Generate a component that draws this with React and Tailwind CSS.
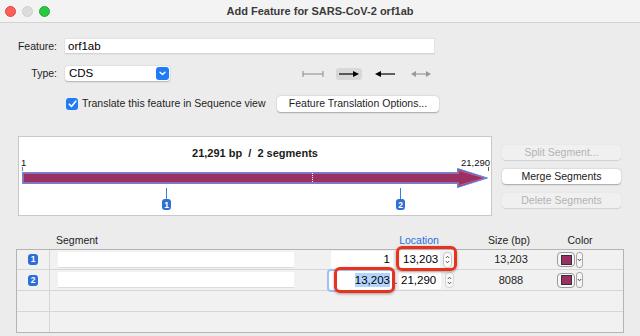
import React from "react";

function Chevron({ className = "" }) {
  return (
    <svg width="7" height="5" viewBox="0 0 7 5" className={className}>
      <path d="M1 1.2 L3.5 3.6 L6 1.2" fill="none" stroke="currentColor" strokeWidth="1.4" strokeLinecap="round" strokeLinejoin="round" />
    </svg>
  );
}

function Stepper({ bg = true }) {
  return (
    <div className={`w-[9px] h-[16px] rounded-[4px] flex flex-col items-center justify-center gap-[1px] ${bg ? "bg-white border border-[#c4c4c4]" : "border border-[#d6d6d6] bg-[#f7f7f7]"}`}>
      <svg width="5" height="4" viewBox="0 0 5 4"><path d="M0.8 3 L2.5 1.2 L4.2 3" fill="none" stroke="#444" strokeWidth="0.9" /></svg>
      <svg width="5" height="4" viewBox="0 0 5 4"><path d="M0.8 1 L2.5 2.8 L4.2 1" fill="none" stroke="#444" strokeWidth="0.9" /></svg>
    </div>
  );
}

function Badge({ n }) {
  return (
    <div className="w-[10px] h-[11px] rounded-[3px] bg-[#2d6fd9] text-white text-[8.5px] font-bold leading-[11px] text-center">{n}</div>
  );
}

function ColorWell() {
  return (
    <div className="flex items-center gap-[1px]">
      <div className="w-[18px] h-[15px] rounded-[4px] border border-[#9a9a9a] bg-[#f6f6f6] flex items-center justify-center">
        <div className="w-[11px] h-[10px] bg-[#9b2f62] border border-[#333]" />
      </div>
      <div className="w-[7px] h-[16px] rounded-[3px] border border-[#a8a8a8] bg-[#f6f6f6] flex items-center justify-center">
        <svg width="5" height="4" viewBox="0 0 5 4"><path d="M0.8 1 L2.5 2.8 L4.2 1" fill="none" stroke="#333" strokeWidth="0.9" /></svg>
      </div>
    </div>
  );
}

export default function App() {
  return (
    <div className="w-[640px] h-[336px] overflow-hidden bg-[#ececec] font-['Liberation_Sans',Arial,sans-serif] text-[10.5px] text-[#1e1e1e] relative">
      {/* Title bar */}
      <div className="h-[23px] grid grid-cols-[1fr_auto_1fr] items-center border-b border-[#d2d2d2] bg-[#f3f3f3]">
        <div className="flex items-center gap-[6px] pl-[5px]">
          <span className="w-[11px] h-[11px] rounded-full bg-[#fe5f57] border border-[#e2463f]" />
          <span className="w-[11px] h-[11px] rounded-full bg-[#dcdcdc] border border-[#cfcfcf]" />
          <span className="w-[11px] h-[11px] rounded-full bg-[#28c840] border border-[#1fae35]" />
        </div>
        <div className="font-bold text-[11px] text-[#3a3a3a]">Add Feature for SARS-CoV-2 orf1ab</div>
        <div />
      </div>

      {/* Feature row */}
      <div className="flex items-center mt-[16px] h-[15px]">
        <div className="w-[57px] text-right">Feature:</div>
        <div className="ml-[8px] w-[369px] h-[15px] bg-white border-b border-[#d4d4d4] shadow-[0_0_0_0.5px_#d8d8d8] pl-[3px] text-[11.5px] leading-[15px] text-black">orf1ab</div>
      </div>

      {/* Type row */}
      <div className="flex items-center mt-[12px] h-[15px]">
        <div className="w-[57px] text-right">Type:</div>
        <div className="ml-[8px] w-[105px] h-[15px] bg-white rounded-[3px] shadow-[0_0.5px_1.5px_rgba(0,0,0,0.25)] flex items-center justify-between pl-[4px] pr-[1px]">
          <span className="text-[11.5px] text-black">CDS</span>
          <div className="w-[13px] h-[13px] rounded-[3px] bg-[#1f7cf6] text-white flex items-center justify-center">
            <Chevron />
          </div>
        </div>
        <div className="ml-[130px] flex items-center gap-[10px]">
          <div className="w-[26px] h-[12px] flex items-center justify-center">
            <svg width="22" height="8" viewBox="0 0 22 8"><path d="M1 1 V7 M1 4 H21 M21 1 V7" stroke="#8a8a8a" strokeWidth="1" fill="none" /></svg>
          </div>
          <div className="w-[26px] h-[12px] rounded-[3px] bg-[#d8d8d8] flex items-center justify-center">
            <svg width="22" height="8" viewBox="0 0 22 8"><path d="M1 4 H16" stroke="#000" strokeWidth="1.2" /><path d="M15 1 L21 4 L15 7 Z" fill="#000" /></svg>
          </div>
          <div className="w-[26px] h-[12px] flex items-center justify-center">
            <svg width="22" height="8" viewBox="0 0 22 8"><path d="M6 4 H21" stroke="#000" strokeWidth="1.2" /><path d="M7 1 L1 4 L7 7 Z" fill="#000" /></svg>
          </div>
          <div className="w-[26px] h-[12px] flex items-center justify-center">
            <svg width="22" height="8" viewBox="0 0 22 8"><path d="M5 4 H17" stroke="#999" strokeWidth="1.2" /><path d="M6 1 L1 4 L6 7 Z M16 1 L21 4 L16 7 Z" fill="#999" /></svg>
          </div>
        </div>
      </div>

      {/* Checkbox row */}
      <div className="flex items-center mt-[15px] h-[16px] pl-[66px]">
        <div className="w-[12px] h-[12px] rounded-[3px] bg-[#1f7cf6] flex items-center justify-center">
          <svg width="9" height="8" viewBox="0 0 9 8"><path d="M1.3 4.2 L3.5 6.4 L7.8 1.2" fill="none" stroke="#fff" strokeWidth="1.6" strokeLinecap="round" strokeLinejoin="round" /></svg>
        </div>
        <div className="ml-[4px] w-[195px] whitespace-nowrap text-[10.5px]">Translate this feature in Sequence view</div>
        <div className="w-[162px] h-[16px] bg-white rounded-[4px] shadow-[0_0.5px_1.5px_rgba(0,0,0,0.3)] flex items-center justify-center text-[10.5px]">
          Feature Translation Options...
        </div>
      </div>

      {/* Diagram + buttons */}
      <div className="flex mt-[24px]">
        <div className="ml-[18px] w-[474px] h-[80px] bg-white border border-[#c8c8c8] relative">
          <div className="absolute top-[8px] left-0 right-0 text-center font-bold text-[11px] text-[#1a1a1a] whitespace-pre">21,291 bp  /  2 segments</div>
          <svg className="absolute left-0 top-0" width="472" height="78" viewBox="19 137 472 78">
            <text x="21" y="166" fontSize="9.5" fill="#111">1</text>
            <path d="M22.5 167 V171" stroke="#888" strokeWidth="1.2" />
            <text x="490" y="166" fontSize="9.5" fill="#111" textAnchor="end">21,290</text>
            <path d="M488.5 167 V171" stroke="#555" strokeWidth="1" />
            <path d="M22.5 172.5 H457.5 V168.5 L487.5 178 L457.5 187.5 V183.5 H22.5 Z" fill="#9b3062" stroke="#4a8ff8" strokeWidth="1" />
            <path d="M23.5 173.5 H458.5 V170.5 L485 178 L458.5 185.5 V182.5 H23.5 Z" fill="none" stroke="#e8a0bd" strokeWidth="0.6" opacity="0.7" />
            <path d="M312.5 173 V183" stroke="#fff" strokeWidth="1" strokeDasharray="1 1" />
            <path d="M166.5 188 V199" stroke="#3b7ddd" strokeWidth="1" />
            <rect x="162" y="199" width="9" height="11" rx="3" fill="#2f6fd6" />
            <text x="166.5" y="208" fontSize="8.5" fontWeight="bold" fill="#fff" textAnchor="middle">1</text>
            <path d="M400.5 188 V199" stroke="#3b7ddd" strokeWidth="1" />
            <rect x="396" y="199" width="9" height="11" rx="3" fill="#2f6fd6" />
            <text x="400.5" y="208" fontSize="8.5" fontWeight="bold" fill="#fff" textAnchor="middle">2</text>
          </svg>
        </div>
        <div className="ml-[10px] w-[119px] pt-[9px] flex flex-col gap-[9px]">
          <div className="h-[15px] rounded-[4px] bg-[#f0f0f0] shadow-[0_0.5px_1px_rgba(0,0,0,0.12)] text-[#b3b3b3] flex items-center justify-center">Split Segment...</div>
          <div className="h-[15px] rounded-[4px] bg-white shadow-[0_0.5px_1.5px_rgba(0,0,0,0.3)] text-[#1a1a1a] flex items-center justify-center">Merge Segments</div>
          <div className="h-[15px] rounded-[4px] bg-[#f0f0f0] shadow-[0_0.5px_1px_rgba(0,0,0,0.12)] text-[#b3b3b3] flex items-center justify-center">Delete Segments</div>
        </div>
      </div>

      {/* Table header */}
      <div className="flex items-center h-[16px] mt-[17px] text-[10.5px]">
        <div className="ml-[56px]">Segment</div>
        <div className="ml-[301px] w-[40px] text-center text-[#1f6fe0]">Location</div>
        <div className="ml-[49px] w-[42px] text-center">Size (bp)</div>
        <div className="ml-[37px] w-[26px] text-center">Color</div>
      </div>

      {/* Table */}
      <div className="ml-[16px] w-[608px] border border-[#b4b4b4] bg-[#f1f1f1]">
        {/* Row 1 */}
        <div className="flex h-[20px] border-b border-[#d6d6d6] items-center">
          <div className="w-[33px] h-full border-r border-[#d6d6d6] flex items-center justify-center"><Badge n="1" /></div>
          <div className="ml-[8px] w-[236px] h-[16px] bg-white border-b border-[#dcdcdc]" />
          <div className="ml-[37px] w-[62px] h-[17px] bg-white text-right pr-[3px] text-[11.5px] leading-[17px] text-black">1</div>
          <div className="w-[7px] text-center text-[11px]">.</div>
          <div className="w-[40px] h-[17px] bg-white pl-[3px] text-[11.5px] leading-[17px] text-black">13,203</div>
          <div className="ml-[3px]"><Stepper /></div>
          <div className="ml-[36px] w-[46px] text-center text-[11px]">13,203</div>
          <div className="ml-[23px]"><ColorWell /></div>
        </div>
        {/* Row 2 */}
        <div className="flex h-[21px] border-b border-[#d6d6d6] items-center">
          <div className="w-[33px] h-full border-r border-[#d6d6d6] flex items-center justify-center"><Badge n="2" /></div>
          <div className="ml-[8px] w-[236px] h-[16px] bg-white border-b border-[#dcdcdc]" />
          <div className="ml-[35px] w-[64px] h-[19px] bg-white rounded-[2px] shadow-[0_0_0_2px_#9dc0f5] flex items-center justify-end pr-[3px]">
            <span className="bg-[#b3d4fc] text-[11.5px] leading-[14px] text-black">13,203</span>
          </div>
          <div className="w-[6px] text-center text-[11px]">.</div>
          <div className="w-[42px] h-[17px] bg-white pl-[2px] text-[11.5px] leading-[17px] text-black">21,290</div>
          <div className="ml-[4px]"><Stepper bg={false} /></div>
          <div className="ml-[34px] w-[46px] text-center text-[11px]">8088</div>
          <div className="ml-[23px]"><ColorWell /></div>
        </div>
        {/* Row 3 */}
        <div className="flex h-[21px] border-b border-[#d6d6d6]">
          <div className="w-[33px] h-full border-r border-[#d6d6d6]" />
        </div>
        {/* Row 4 */}
        <div className="flex h-[20px]">
          <div className="w-[33px] h-full border-r border-[#d6d6d6]" />
        </div>
      </div>

      {/* Red annotation boxes */}
      <div className="absolute left-[396px] top-[246px] w-[61px] h-[25px] rounded-[6px] border-[3px] border-[#e8321e] shadow-[0_1px_3px_rgba(0,0,0,0.35)]" />
      <div className="absolute left-[334px] top-[267px] w-[61px] h-[26px] rounded-[6px] border-[3px] border-[#e8321e] shadow-[0_1px_3px_rgba(0,0,0,0.35)]" />
    </div>
  );
}
